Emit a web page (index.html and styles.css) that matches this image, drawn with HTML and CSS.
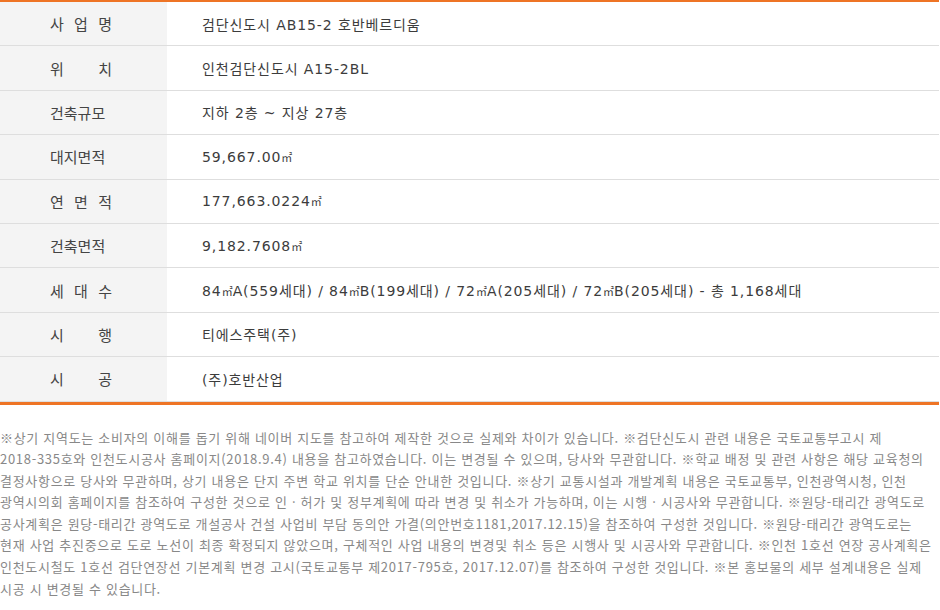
FILE: index.html
```html
<!DOCTYPE html>
<html lang="ko">
<head>
<meta charset="UTF-8">
<meta name="viewport" content="width=device-width, initial-scale=1.0">
<title>사업개요</title>
<link rel="stylesheet" href="styles.css">
</head>
<body>
<div class="overview">
    <div class="table-wrap">
        <table class="info-table">
            <tr><th><span class="label">사 업 명</span></th><td>검단신도시 AB15-2 호반베르디움</td></tr>
            <tr><th><span class="label">위 치</span></th><td>인천검단신도시 A15-2BL</td></tr>
            <tr><th><span class="label">건축규모</span></th><td>지하 2층 ~ 지상 27층</td></tr>
            <tr><th><span class="label">대지면적</span></th><td>59,667.00<span class="unit">㎡</span></td></tr>
            <tr><th><span class="label">연 면 적</span></th><td>177,663.0224<span class="unit">㎡</span></td></tr>
            <tr><th><span class="label">건축면적</span></th><td>9,182.7608<span class="unit">㎡</span></td></tr>
            <tr><th><span class="label">세 대 수</span></th><td>84<span class="unit">㎡</span>A(559세대) / 84<span class="unit">㎡</span>B(199세대) / 72<span class="unit">㎡</span>A(205세대) / 72<span class="unit">㎡</span>B(205세대) - 총 1,168세대</td></tr>
            <tr><th><span class="label">시 행</span></th><td>티에스주택(주)</td></tr>
            <tr><th><span class="label">시 공</span></th><td>(주)호반산업</td></tr>
        </table>
    </div>

    <p class="notes">※상기 지역도는 소비자의 이해를 돕기 위해 네이버 지도를 참고하여 제작한 것으로 실제와 차이가 있습니다. ※검단신도시 관련 내용은 국토교통부고시 제 <span class="nowrap">2018-335호와</span> 인천도시공사 홈페이지(2018.9.4) 내용을 참고하였습니다. 이는 변경될 수 있으며, 당사와 무관합니다. ※학교 배정 및 관련 사항은 해당 교육청의 결정사항으로 당사와 무관하며, 상기 내용은 단지 주변 학교 위치를 단순 안내한 것입니다. ※상기 교통시설과 개발계획 내용은 국토교통부, 인천광역시청, 인천 광역시의회 홈페이지를 참조하여 구성한 것으로 인 · 허가 및 정부계획에 따라 변경 및 취소가 가능하며, 이는 시행 · 시공사와 무관합니다. ※원당-태리간 광역도로 공사계획은 원당-태리간 광역도로 개설공사 건설 사업비 부담 동의안 가결(의안번호1181,2017.12.15)을 참조하여 구성한 것입니다. ※원당-태리간 광역도로는 현재 사업 추진중으로 도로 노선이 최종 확정되지 않았으며, 구체적인 사업 내용의 변경및 취소 등은 시행사 및 시공사와 무관합니다. ※인천 1호선 연장 공사계획은 인천도시철도 1호선 검단연장선 기본계획 변경 고시(국토교통부 제2017-795호, 2017.12.07)를 참조하여 구성한 것입니다. ※본 홍보물의 세부 설계내용은 실제 시공 시 변경될 수 있습니다.</p>
</div>
</body>
</html>
```

FILE: styles.css
```css
body {
    margin: 0;
    padding: 0;
    background: #fff;
    font-family: "Noto Sans CJK KR", "Noto Sans", sans-serif;
    color: #444;
}
.overview {
    width: 940px;
}
.table-wrap {
    width: 939px;
    border-top: 2px solid #ee7425;
    border-bottom: 3px solid #ee7425;
}
.info-table {
    width: 100%;
    border-collapse: collapse;
}
.info-table th,
.info-table td {
    height: 43.4px;
    padding: 0;
    border-bottom: 1px solid #dedede;
    font-weight: normal;
    vertical-align: middle;
}
.info-table th {
    width: 167px;
    background-color: #f4f4f4;
    text-align: left;
    padding-left: 50px;
    box-sizing: border-box;
    font-size: 15px;
}
.info-table td {
    padding-left: 35px;
    font-family: "DejaVu Sans", "Noto Sans CJK KR", sans-serif;
    font-size: 14px;
    letter-spacing: 0.9px;
    color: #3c3c3c;
}
.unit {
    font-size: 11px;
    letter-spacing: 0;
}
.label {
    display: inline-block;
    width: 62px;
    text-align: justify;
    text-align-last: justify;
}
.notes {
    margin: 22px 0 0;
    font-size: 13px;
    line-height: 21.6px;
    letter-spacing: 0.7px;
    word-break: keep-all;
    color: #888;
}
.nowrap {
    white-space: nowrap;
}
```
